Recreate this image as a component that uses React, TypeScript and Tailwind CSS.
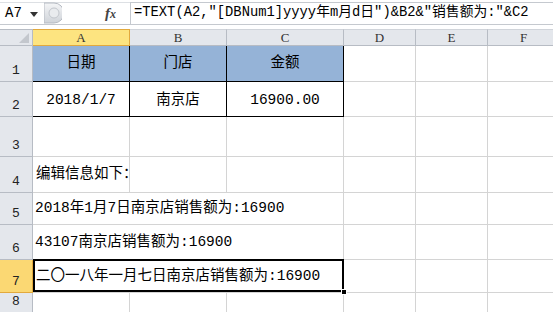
import React from 'react';

const cols = ['A', 'B', 'C', 'D', 'E', 'F'];
const rowHeights = [36, 35, 40, 36, 32, 35, 33, 20];

const mono = "font-['Liberation_Mono','Noto_Sans_CJK_SC',monospace]";

const Cell: React.FC<{ className?: string; children?: React.ReactNode }> = ({ className = '', children }) => (
  <div className={`border-r border-b border-[#d4d4d4] flex items-center overflow-visible whitespace-nowrap ${className}`}>
    {children}
  </div>
);

const RowHead: React.FC<{ n: number; active?: boolean }> = ({ n, active }) => (
  <div
    className={`flex items-end justify-center pb-[1px] text-[13px] text-[#222] font-['Liberation_Mono',monospace] border-r border-b ${
      active ? 'bg-[#fbd873] border-[#e2a93d]' : 'bg-[#e4e7ec] border-[#b7bcc4]'
    }`}
  >
    {n}
  </div>
);

export default function App() {
  return (
    <div className="w-[553px] h-[312px] overflow-hidden bg-white select-none">
      {/* formula bar */}
      <div className="h-[25px] flex items-stretch border-b border-[#c5c9cf] bg-white">
        <div className="w-[44px] flex items-center pl-[5px] gap-[8px] border-t border-[#dde0e4] mt-[2px]">
          <span className={`${mono} text-[14px] text-black`}>A7</span>
          <svg width="8" height="5" viewBox="0 0 8 5" className="mt-[2px]">
            <path d="M0 0 H8 L4 5 Z" fill="#333" />
          </svg>
        </div>
        <div className="w-[86px] flex items-center border-t border-[#dde0e4] mt-[2px] relative">
          <svg width="18" height="22" viewBox="0 0 18 22" className="-mt-[1px]">
            <defs>
              <linearGradient id="g" x1="0" y1="0" x2="0" y2="1">
                <stop offset="0" stopColor="#f4f5f7" />
                <stop offset="1" stopColor="#cfd3d9" />
              </linearGradient>
            </defs>
            <path d="M0 1 H10 A10 10 0 0 1 10 21 H0 Z" fill="url(#g)" stroke="#b5bac2" />
            <circle cx="10" cy="11" r="5" fill="#e9ebee" stroke="#c2c6cc" />
          </svg>
          <span className="ml-auto mr-[14px] italic font-bold text-[15px] text-[#444] font-['Liberation_Serif',serif]">
            f<span className="text-[12px]">x</span>
          </span>
        </div>
        <div className={`flex-1 flex items-center pl-[3px] border-l border-t border-[#c5c9cf] mt-[2px] ${mono} text-[13.8px] text-black whitespace-nowrap overflow-hidden`}>
          =TEXT(A2,"[DBNum1]yyyy年m月d日")&amp;B2&amp;"销售额为:"&amp;C2
        </div>
      </div>
      <div className="h-[4px] bg-white" />

      {/* sheet */}
      <div
        className="grid"
        style={{
          gridTemplateColumns: '33px 97px 97px 117px 72px 72px 72px',
          gridTemplateRows: `17px ${rowHeights.map((h) => h + 'px').join(' ')}`,
        }}
      >
        {/* corner */}
        <div className="bg-[#e4e7ec] border-r border-b border-[#b7bcc4] border-t relative">
          <svg width="10" height="10" viewBox="0 0 10 10" className="absolute right-[3px] bottom-[2px]">
            <path d="M10 0 V10 H0 Z" fill="#c3c7cd" />
          </svg>
        </div>
        {cols.map((c) => (
          <div
            key={c}
            className={`flex items-center justify-center text-[13px] font-['Liberation_Serif',serif] border-r border-b border-t ${
              c === 'A'
                ? 'bg-[#fde480] border-[#e2a93d] text-[#333]'
                : 'bg-[#e4e7ec] border-[#b7bcc4] border-t-[#d0d4da] text-[#333]'
            }`}
          >
            {c}
          </div>
        ))}

        {/* row 1 */}
        <RowHead n={1} />
        <Cell className={`justify-center bg-[#95b3d7] !border-black ${mono} text-[14.5px]`}>日期</Cell>
        <Cell className={`justify-center bg-[#95b3d7] !border-black ${mono} text-[14.5px]`}>门店</Cell>
        <Cell className={`justify-center bg-[#95b3d7] !border-black ${mono} text-[14.5px]`}>金额</Cell>
        <Cell />
        <Cell />
        <Cell />

        {/* row 2 */}
        <RowHead n={2} />
        <Cell className={`justify-center pt-[3px] !border-black ${mono} text-[14.5px]`}>2018/1/7</Cell>
        <Cell className={`justify-center pt-[3px] !border-black ${mono} text-[14.5px]`}>南京店</Cell>
        <Cell className={`justify-center pt-[3px] !border-black ${mono} text-[14.5px]`}>16900.00</Cell>
        <Cell />
        <Cell />
        <Cell />

        {/* row 3 */}
        <RowHead n={3} />
        <Cell />
        <Cell />
        <Cell />
        <Cell />
        <Cell />
        <Cell />

        {/* row 4 */}
        <RowHead n={4} />
        <Cell className={`pl-[3px] pt-[1px] ${mono} text-[14.5px] relative z-10`}>编辑信息如下：</Cell>
        <Cell />
        <Cell />
        <Cell />
        <Cell />
        <Cell />

        {/* row 5 */}
        <RowHead n={5} />
        <Cell className={`col-span-3 pl-[2px] pt-[1px] ${mono} text-[14.5px]`}>2018年1月7日南京店销售额为:16900</Cell>
        <Cell />
        <Cell />
        <Cell />

        {/* row 6 */}
        <RowHead n={6} />
        <Cell className={`col-span-3 pl-[2px] pt-[1px] ${mono} text-[14.5px]`}>43107南京店销售额为:16900</Cell>
        <Cell />
        <Cell />
        <Cell />

        {/* row 7 */}
        <RowHead n={7} active />
        <Cell className={`col-span-3 pl-[3px] pt-[1px] ${mono} text-[14.5px] relative`}>
          二〇一八年一月七日南京店销售额为:16900
          <div className="absolute -top-[1px] left-0 -right-[1px] bottom-0 border-[2.5px] border-black pointer-events-none" />
          <div className="absolute -right-[4px] -bottom-[3px] w-[6px] h-[6px] bg-black border border-white" />
        </Cell>
        <Cell />
        <Cell />
        <Cell />

        {/* row 8 */}
        <RowHead n={8} />
        <Cell />
        <Cell />
        <Cell />
        <Cell />
        <Cell />
        <Cell />
      </div>
    </div>
  );
}
